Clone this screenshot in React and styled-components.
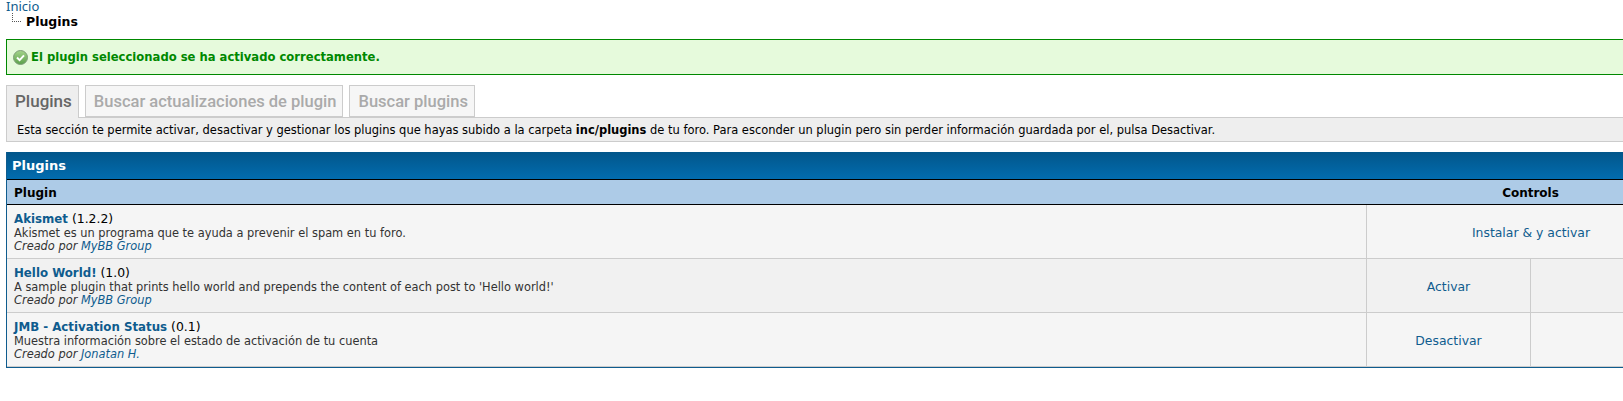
import React from 'react';
import styled, {createGlobalStyle} from 'styled-components';

const GlobalStyle = createGlobalStyle`
  html, body {
    margin: 0;
    background: #fff;
    overflow: hidden;
  }
  body {
    font-family: 'DejaVu Sans', Verdana, sans-serif;
    font-size: 11.4px;
    color: #000;
  }
`;

const Page = styled.div`
  width: 1690px;
  padding: 0 6px;
`;

const Crumbs = styled.div`
  height: 39px;
`;

const HomeLink = styled.a`
  display: block;
  font-family: 'Noto Sans', sans-serif;
  font-size: 13px;
  line-height: 13px;
  color: #0f5c8e;
`;

const CurrentCrumb = styled.div`
  display: flex;
  align-items: flex-start;
  gap: 5px;
  margin-left: 6px;
  font-size: 12.5px;
  font-weight: bold;
  line-height: 18px;
`;

const CrumbLine = styled.span`
  width: 8px;
  height: 8px;
  border-left: 1px dotted #555;
  border-bottom: 1px dotted #555;
`;

const Message = styled.div`
  display: flex;
  align-items: center;
  gap: 3px;
  height: 34px;
  padding-left: 6px;
  background: #e6fadc;
  border: 1px solid #080;
  color: #080;
  font-size: 11.6px;
  font-weight: bold;
`;

const Tabs = styled.div`
  display: flex;
  gap: 6px;
  margin-top: 10px;
  height: 33px;
`;

const Tab = styled.div`
  padding: 0 6px 0 8px;
  height: ${p => (p.$active ? 33 : 32)}px;
  box-sizing: border-box;
  background: ${p => (p.$active ? '#eee' : '#f6f6f6')};
  border: 1px solid #ccc;
  border-bottom: ${p => (p.$active ? 0 : '1px solid #ccc')};
  color: ${p => (p.$active ? '#666' : '#aaa')};
  font-family: Roboto, sans-serif;
  font-size: ${p => (p.$active ? 17 : 16.5)}px;
  font-weight: 500;
  line-height: 31px;
  position: relative;
  z-index: ${p => (p.$active ? 1 : 0)};
`;

const TabNote = styled.div`
  height: 23px;
  margin-top: -1px;
  padding-left: 10px;
  background: #eee;
  border: 1px solid #ccc;
  font-size: 11.48px;
  line-height: 24px;
`;

const Wrapper = styled.div`
  margin-top: 10px;
  border: 1px solid #0f5c8e;
  border-top: 0;
`;

const Head = styled.div`
  height: 27px;
  padding-left: 5px;
  background: linear-gradient(#02568a, #026caf);
  color: #fff;
  font-size: 13px;
  font-weight: bold;
  line-height: 28px;
`;

const Columns = styled.div`
  display: grid;
  grid-template-columns: 1fr 329px;
  height: 24px;
  background: #adcbe7;
  border-top: 1px solid #000;
  border-bottom: 1px solid #000;
  font-size: 12px;
  font-weight: bold;
  line-height: 26px;
`;

const ColumnName = styled.div`
  padding-left: ${p => (p.$center ? 0 : 7)}px;
  text-align: ${p => (p.$center ? 'center' : 'left')};
`;

const Row = styled.div`
  display: grid;
  grid-template-columns: 1fr 164px 165px;
  height: 53px;
  background: ${p => (p.$alt ? '#f1f1f1' : '#f5f5f5')};
  border-bottom: 1px solid #ccc;
`;

const Info = styled.div`
  padding: 7px 0 0 7px;
  line-height: 13px;
  color: #333;
`;

const Title = styled.div`
  font-size: 12.4px;
  line-height: 14px;
  margin-bottom: 1px;
  color: #000;
`;

const TitleLink = styled.strong`
  color: #0f5c8e;
  font-size: 11.8px;
`;

const Author = styled.em`
  display: block;
  color: #333;
`;

const AuthorLink = styled.span`
  color: #0f5c8e;
`;

const Control = styled.div`
  grid-column: span ${p => p.$span || 1};
  display: flex;
  align-items: center;
  justify-content: center;
  padding-top: 2px;
  border-left: 1px solid #ccc;
  color: #0f5c8e;
  font-size: 12.4px;
`;

const CheckIcon = () => (
  <svg width="15" height="15" viewBox="0 0 15 15">
    <defs>
      <linearGradient id="ok" x1="0" y1="0" x2="0" y2="1">
        <stop offset="0" stopColor="#a5d48c" />
        <stop offset="1" stopColor="#5aa04a" />
      </linearGradient>
    </defs>
    <circle cx="7.5" cy="7.5" r="7" fill="url(#ok)" stroke="#7f9f7a" />
    <path d="M4 7.5l2.6 2.6L11 5.4" fill="none" stroke="#fff" strokeWidth="2" />
  </svg>
);

const plugins = [
  {
    name: 'Akismet',
    version: '(1.2.2)',
    text: 'Akismet es un programa que te ayuda a prevenir el spam en tu foro.',
    author: 'MyBB Group',
    controls: ['Instalar & y activar'],
  },
  {
    name: 'Hello World!',
    version: '(1.0)',
    text: "A sample plugin that prints hello world and prepends the content of each post to 'Hello world!'",
    author: 'MyBB Group',
    controls: ['Activar', ''],
  },
  {
    name: 'JMB - Activation Status',
    version: '(0.1)',
    text: 'Muestra información sobre el estado de activación de tu cuenta',
    author: 'Jonatan H.',
    controls: ['Desactivar', ''],
  },
];

const App = () => (
  <Page>
    <GlobalStyle />
    <Crumbs>
      <HomeLink>Inicio</HomeLink>
      <CurrentCrumb>
        <CrumbLine />
        Plugins
      </CurrentCrumb>
    </Crumbs>
    <Message>
      <CheckIcon />
      El plugin seleccionado se ha activado correctamente.
    </Message>
    <Tabs>
      <Tab $active>Plugins</Tab>
      <Tab>Buscar actualizaciones de plugin</Tab>
      <Tab>Buscar plugins</Tab>
    </Tabs>
    <TabNote>
      Esta sección te permite activar, desactivar y gestionar los plugins que hayas subido a la carpeta <strong>inc/plugins</strong> de tu foro. Para esconder un plugin pero sin perder información guardada por el, pulsa Desactivar.
    </TabNote>
    <Wrapper>
      <Head>Plugins</Head>
      <Columns>
        <ColumnName>Plugin</ColumnName>
        <ColumnName $center>Controls</ColumnName>
      </Columns>
      {plugins.map((plugin, i) => (
        <Row key={plugin.name} $alt={i === 1}>
          <Info>
            <Title>
              <TitleLink>{plugin.name}</TitleLink> {plugin.version}
            </Title>
            {plugin.text}
            <Author>
              Creado por <AuthorLink>{plugin.author}</AuthorLink>
            </Author>
          </Info>
          {plugin.controls.map((label, j) => (
            <Control key={j} $span={plugin.controls.length === 1 ? 2 : 1}>{label}</Control>
          ))}
        </Row>
      ))}
    </Wrapper>
  </Page>
);

export default App;
